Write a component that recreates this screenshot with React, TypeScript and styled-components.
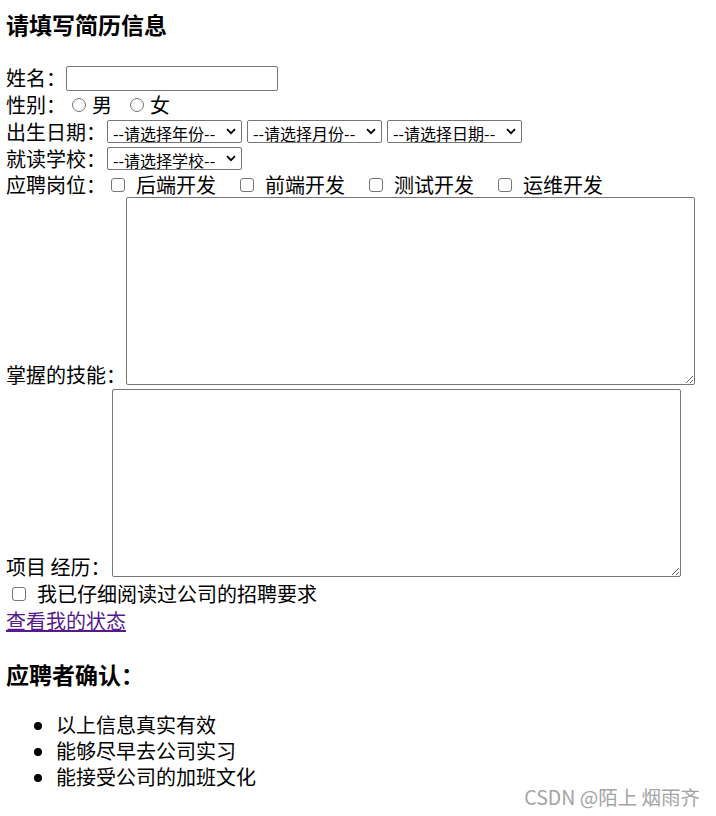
import React from 'react';
import styled, { createGlobalStyle } from 'styled-components';

const GlobalStyle = createGlobalStyle`
  html, body {
    margin: 0;
    padding: 0;
    background: #fff;
  }
  body {
    font-family: "Noto Sans CJK SC", "Noto Sans", sans-serif;
    font-size: 20px;
    color: #000;
  }
`;

const Page = styled.div`
  position: relative;
  min-height: 816px;
  padding: 9px 0 0 6px;
  box-sizing: border-box;
`;

const Title = styled.h3<{ $top?: number }>`
  margin: ${(p) => p.$top ?? 0}px 0 0;
  font-size: 23px;
  font-weight: bold;
  line-height: 30px;
`;

const Form = styled.form`
  display: flex;
  flex-direction: column;
  margin-top: 25px;
`;

const Row = styled.div<{ $h?: number; $end?: boolean }>`
  display: flex;
  align-items: ${(p) => (p.$end ? 'flex-end' : 'center')};
  height: ${(p) => (p.$h ? `${p.$h}px` : 'auto')};
`;

const Label = styled.span`
  white-space: nowrap;
  line-height: 27px;
`;

const TextInput = styled.input`
  align-self: flex-end;
  width: 212px;
  height: 25px;
  box-sizing: border-box;
  border: 1px solid #767676;
  border-radius: 2px;
  padding: 1px 3px;
  font: inherit;
  font-size: 16px;
`;

const Option = styled.label<{ $gap: number }>`
  display: inline-flex;
  align-items: center;
  margin-right: ${(p) => p.$gap}px;
  line-height: 27px;
`;

const Radio = styled.input.attrs({ type: 'radio' })`
  appearance: none;
  width: 14px;
  height: 14px;
  margin: 0 6px;
  border: 1px solid #767676;
  border-radius: 50%;
  box-sizing: border-box;
  background: #fff;
`;

const Check = styled.input.attrs({ type: 'checkbox' })<{ $left: number }>`
  appearance: none;
  flex: none;
  width: 14px;
  height: 14px;
  margin: 0 11px 0 ${(p) => p.$left}px;
  border: 1px solid #767676;
  border-radius: 3px;
  box-sizing: border-box;
  background: #fff;
`;

const Selects = styled.div`
  display: flex;
  gap: 5px;
  margin-left: 1px;
`;

const SelectBox = styled.div`
  display: flex;
  align-items: center;
  width: 135px;
  height: 23px;
  box-sizing: border-box;
  border: 1px solid #767676;
  border-radius: 2px;
  background: #fff;
`;

const Select = styled.select`
  appearance: none;
  flex: 1;
  min-width: 0;
  height: 100%;
  border: none;
  outline: none;
  background: transparent;
  padding: 0 0 0 5px;
  font-family: "Noto Sans CJK SC", sans-serif;
  font-size: 16px;
  color: #000;
`;

const Chevron = styled.svg`
  flex: none;
  margin-right: 5px;
  pointer-events: none;
`;

const TextArea = styled.textarea<{ $mt?: number; $ml?: number }>`
  width: 569px;
  height: 188px;
  box-sizing: border-box;
  margin: ${(p) => p.$mt ?? 0}px 0 3px ${(p) => p.$ml ?? 0}px;
  border: 1px solid #767676;
  border-radius: 2px;
  font: inherit;
  font-size: 16px;
`;

const Link = styled.a`
  color: #551a8b;
  text-decoration: underline;
  line-height: 27px;
`;

const List = styled.ul`
  margin: 23px 0 0;
  padding-left: 50px;
`;

const Item = styled.li`
  line-height: 26px;
`;

const Watermark = styled.div`
  position: absolute;
  right: 16px;
  top: 781px;
  font-size: 19.5px;
  line-height: 32px;
  color: #a3a3a3;
  white-space: nowrap;
`;

const Dropdown: React.FC<{ placeholder: string }> = ({ placeholder }) => (
  <SelectBox>
    <Select defaultValue="">
      <option value="">{placeholder}</option>
    </Select>
    <Chevron width="10" height="7" viewBox="0 0 10 7">
      <path d="M1 1.2 L5 5.2 L9 1.2" fill="none" stroke="#000" strokeWidth="1.8" />
    </Chevron>
  </SelectBox>
);

const positions = ['后端开发', '前端开发', '测试开发', '运维开发'];
const promises = ['以上信息真实有效', '能够尽早去公司实习', '能接受公司的加班文化'];

const App: React.FC = () => (
  <Page>
    <GlobalStyle />
    <Title>请填写简历信息</Title>
    <Form>
      <Row $h={27}>
        <Label>姓名：</Label>
        <TextInput type="text" />
      </Row>
      <Row $h={27}>
        <Label>性别：</Label>
        <Option $gap={12}>
          <Radio name="sex" />男
        </Option>
        <Option $gap={0}>
          <Radio name="sex" />女
        </Option>
      </Row>
      <Row $h={27}>
        <Label>出生日期：</Label>
        <Selects>
          <Dropdown placeholder="--请选择年份--" />
          <Dropdown placeholder="--请选择月份--" />
          <Dropdown placeholder="--请选择日期--" />
        </Selects>
      </Row>
      <Row $h={27}>
        <Label>就读学校：</Label>
        <Selects>
          <Dropdown placeholder="--请选择学校--" />
        </Selects>
      </Row>
      <Row $h={25}>
        <Label>应聘岗位：</Label>
        {positions.map((p) => (
          <Option key={p} $gap={19}>
            <Check $left={5} />
            {p}
          </Option>
        ))}
      </Row>
      <Row $end>
        <Label>掌握的技能：</Label>
        <TextArea />
      </Row>
      <Row $end>
        <Label>项目 经历：</Label>
        <TextArea $mt={1} $ml={2} />
      </Row>
      <Row $h={27}>
        <Option $gap={0}>
          <Check $left={6} />
          我已仔细阅读过公司的招聘要求
        </Option>
      </Row>
      <Row $h={27}>
        <Link href="#">查看我的状态</Link>
      </Row>
    </Form>
    <Title $top={25}>应聘者确认：</Title>
    <List>
      {promises.map((p) => (
        <Item key={p}>{p}</Item>
      ))}
    </List>
    <Watermark>CSDN @陌上 烟雨齐</Watermark>
  </Page>
);

export default App;
